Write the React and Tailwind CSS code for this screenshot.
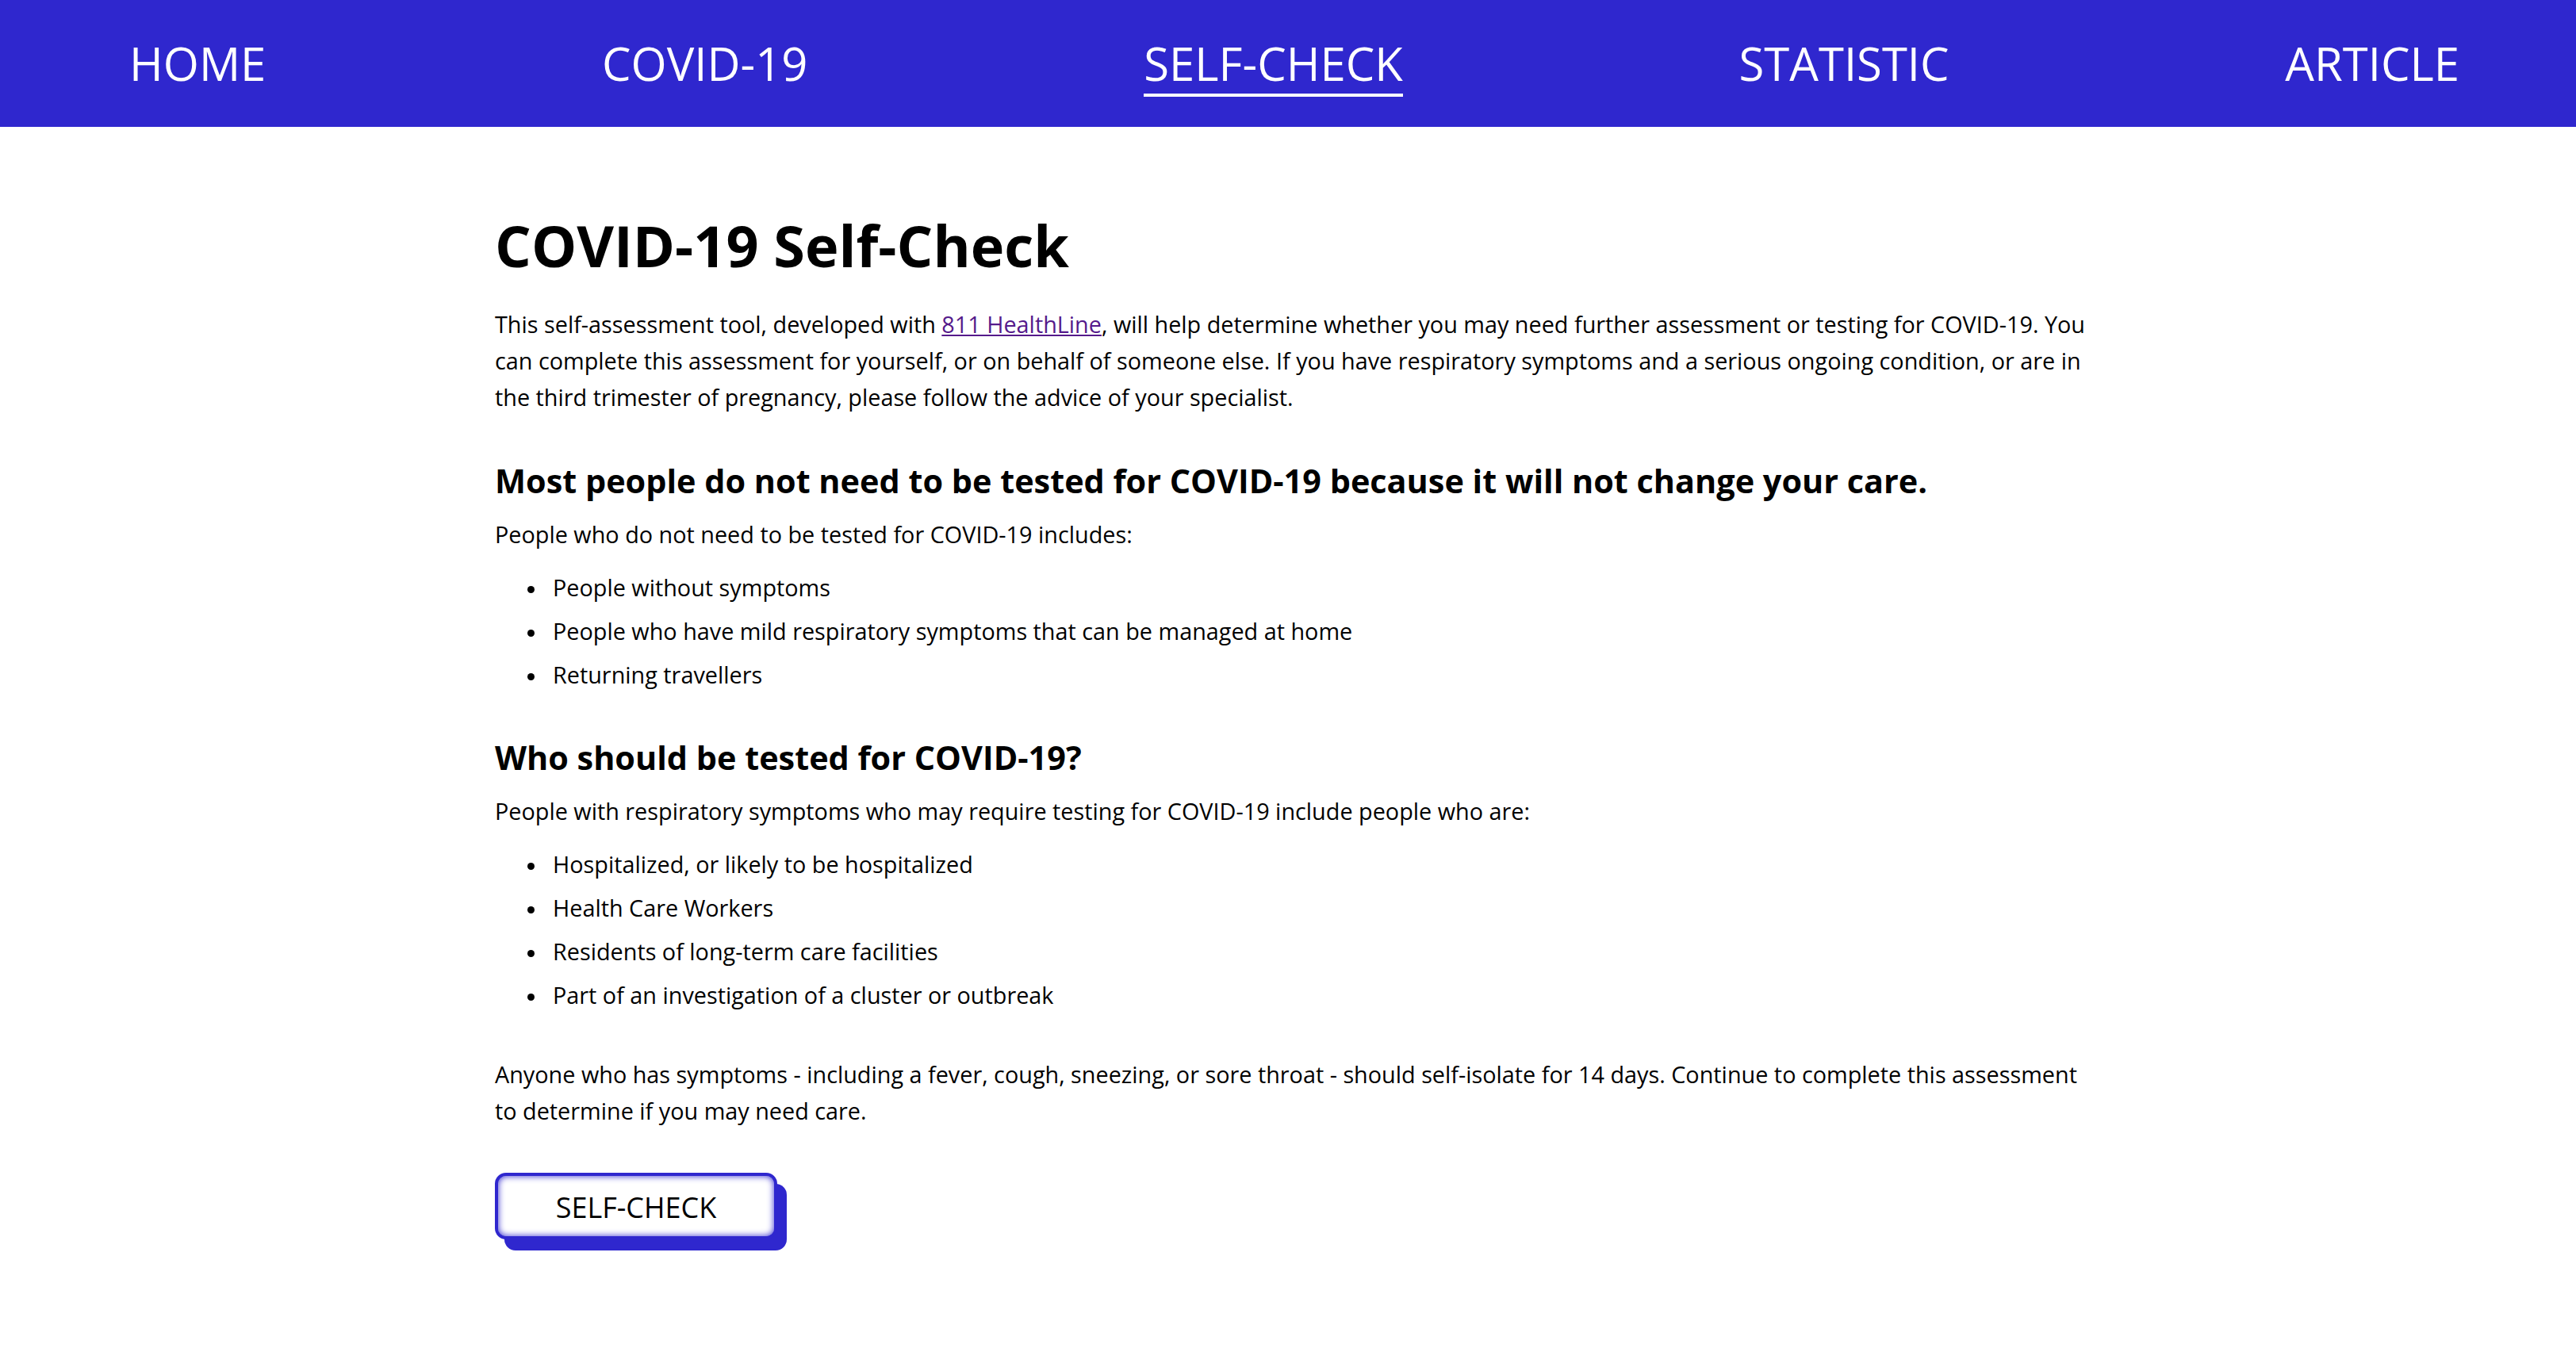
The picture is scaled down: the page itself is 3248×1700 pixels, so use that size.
const navItems = [
  { label: "HOME" },
  { label: "COVID-19" },
  { label: "SELF-CHECK", active: true },
  { label: "STATISTIC" },
  { label: "ARTICLE" },
];

const noTest = [
  "People without symptoms",
  "People who have mild respiratory symptoms that can be managed at home",
  "Returning travellers",
];

const shouldTest = [
  "Hospitalized, or likely to be hospitalized",
  "Health Care Workers",
  "Residents of long-term care facilities",
  "Part of an investigation of a cluster or outbreak",
];

const BulletList = ({ items }) => (
  <ul className="mt-[16px] pl-[41px]">
    {items.map((item) => (
      <li key={item} className="flex items-center leading-[55px]">
        <span className="mr-[23px] mt-[6px] h-[9px] w-[9px] shrink-0 rounded-full bg-black" />
        {item}
      </li>
    ))}
  </ul>
);

export default function App() {
  return (
    <div className="min-h-screen bg-white font-['Open_Sans',sans-serif] text-black">
      {/* Top navigation */}
      <nav className="flex h-[160px] items-center justify-between bg-[#2f27ce] pl-[163px] pr-[147px]">
        {navItems.map((item) => (
          <a
            key={item.label}
            href="#"
            className="relative text-[58px] leading-[58px] text-white"
          >
            {item.label}
            {item.active && (
              <span className="absolute left-0 right-0 top-[67px] h-[4px] bg-white" />
            )}
          </a>
        ))}
      </nav>

      {/* Main content */}
      <main className="ml-[624px] w-[2014px] pb-[120px] text-[28.8px] leading-[46px]">
        <h1 className="mt-[103px] text-[72px] font-bold leading-[92px]">
          COVID-19 Self-Check
        </h1>
        <p className="mt-[31px]">
          This self-assessment tool, developed with{" "}
          <a href="#" className="text-[#551a8b] underline">
            811 HealthLine
          </a>
          , will help determine whether you may need further assessment or testing for COVID-19. You
          can complete this assessment for yourself, or on behalf of someone else. If you have
          respiratory symptoms and a serious ongoing condition, or are in the third trimester of
          pregnancy, please follow the advice of your specialist.
        </p>

        <h2 className="mt-[57px] text-[41.4px] font-bold leading-[50px]">
          Most people do not need to be tested for COVID-19 because it will not change your care.
        </h2>
        <p className="mt-[20px]">People who do not need to be tested for COVID-19 includes:</p>
        <BulletList items={noTest} />

        <h2 className="mt-[52px] text-[41.4px] font-bold leading-[50px]">
          Who should be tested for COVID-19?
        </h2>
        <p className="mt-[20px]">
          People with respiratory symptoms who may require testing for COVID-19 include people who
          are:
        </p>
        <BulletList items={shouldTest} />

        <p className="mt-[50px]">
          Anyone who has symptoms - including a fever, cough, sneezing, or sore throat - should
          self-isolate for 14 days. Continue to complete this assessment to determine if you may
          need care.
        </p>

        <button
          type="button"
          className="mt-[55px] flex h-[84px] w-[356px] items-center justify-center rounded-[14px] border-4 border-[#2f27ce] bg-white pt-[4px] text-[36px] leading-none text-black shadow-[inset_0_0_8px_#2f27ce,12px_14px_0_#2f27ce]"
        >
          SELF-CHECK
        </button>
      </main>
    </div>
  );
}
